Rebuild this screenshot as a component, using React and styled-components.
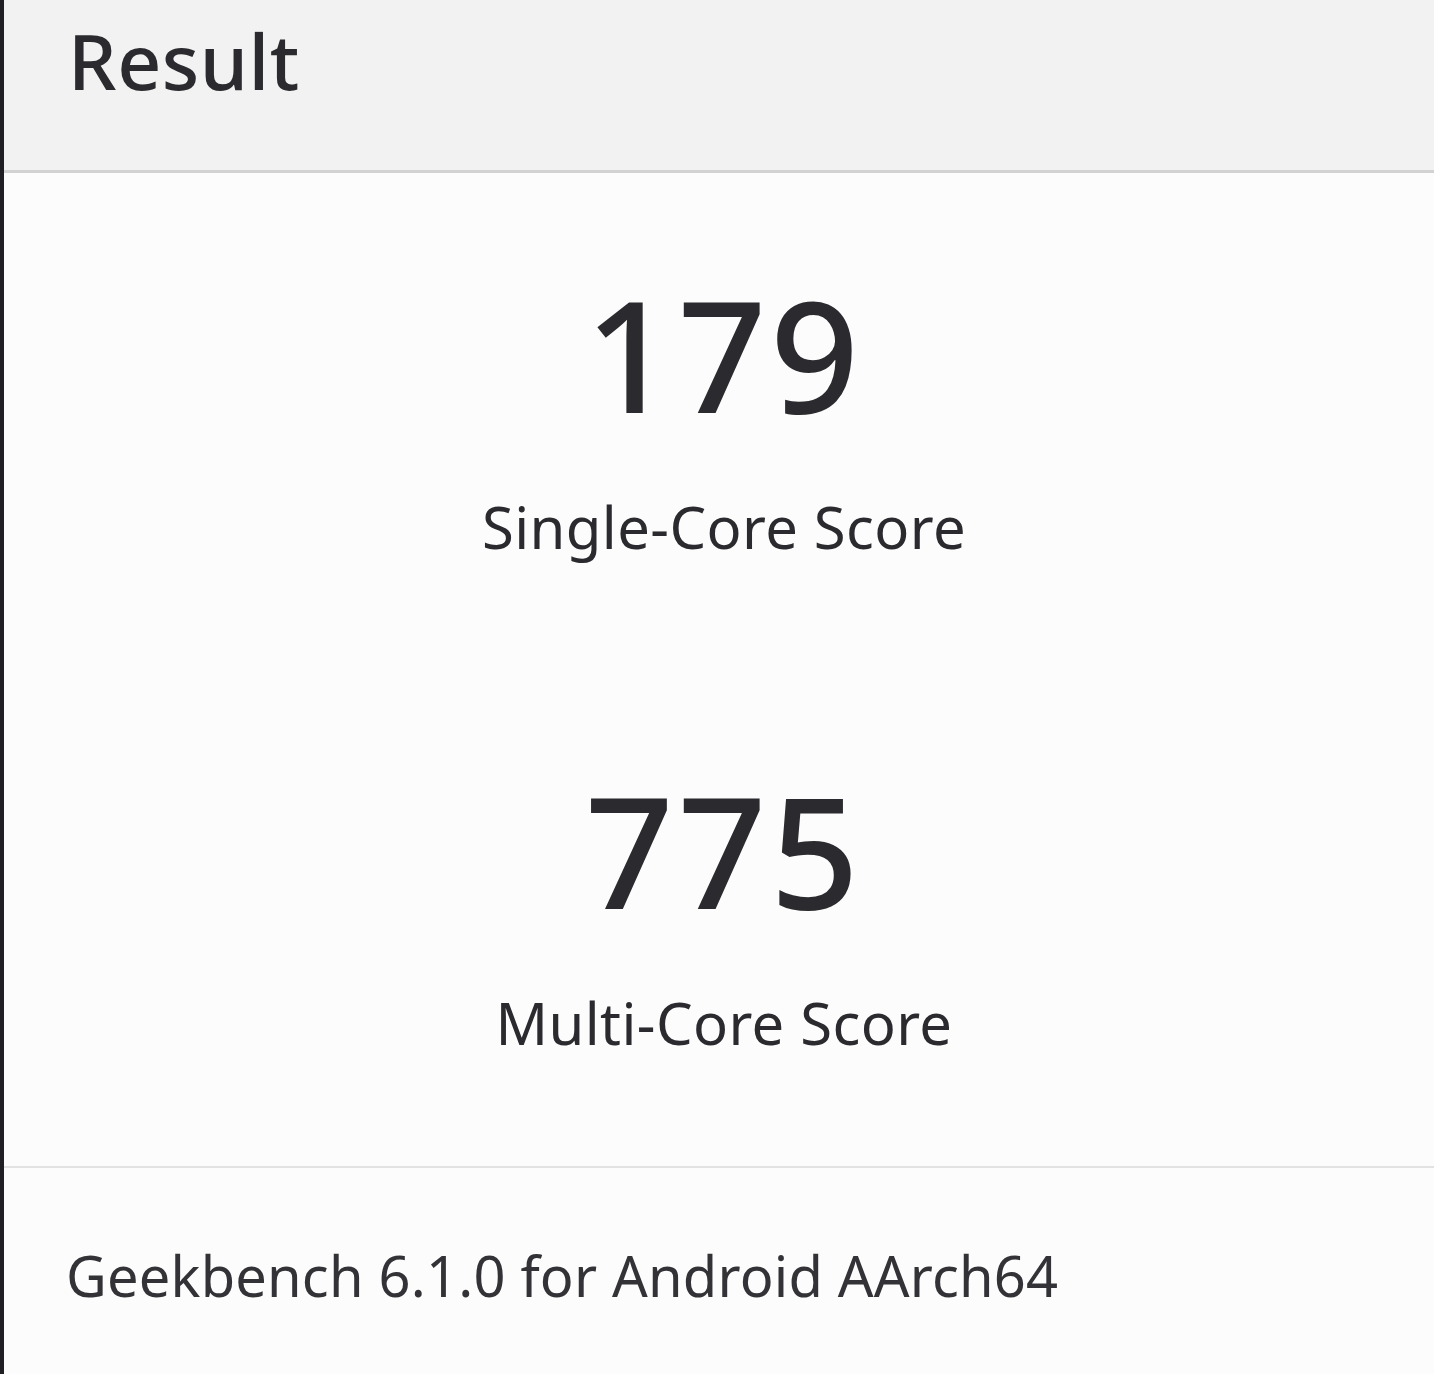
import styled, { createGlobalStyle } from "styled-components";

const GlobalStyle = createGlobalStyle`
    html, body {
        margin: 0;
        padding: 0;
        background: #fcfcfc;
    }
    body {
        font-family: "Noto Sans", "Open Sans", sans-serif;
        color: #2b2b2f;
    }
`;

const Screen = styled.div`
    width: 1434px;
    height: 1374px;
    display: flex;
    flex-direction: column;
    border-left: 4px solid #1f1f24;
    box-sizing: border-box;
    background: #fcfcfc;
    overflow: hidden;
`;

const Header = styled.header`
    height: 170px;
    flex-shrink: 0;
    background: #f2f2f2;
    border-bottom: 3px solid #d2d2d2;
    padding-left: 64px;
    display: flex;
    align-items: flex-start;
`;

const Title = styled.h1`
    margin: 0;
    margin-top: 11px;
    font-size: 77px;
    font-weight: 500;
    line-height: 100px;
    letter-spacing: 0.5px;
`;

const Scores = styled.section`
    height: 995px;
    flex-shrink: 0;
    display: flex;
    flex-direction: column;
    align-items: center;
    padding-top: 90px;
    padding-left: 10px;
    box-sizing: border-box;
    border-bottom: 2px solid #e2e2e2;
    gap: 192px;
`;

const ScoreBlock = styled.div`
    display: flex;
    flex-direction: column;
    align-items: center;
`;

const ScoreValue = styled.div`
    font-size: 155px;
    font-weight: 500;
    line-height: 180px;
    letter-spacing: 4px;
`;

const ScoreLabel = styled.div`
    margin-top: 44px;
    font-size: 58px;
    line-height: 80px;
    letter-spacing: 0.4px;
`;

const Footer = styled.footer`
    padding-left: 62px;
    padding-top: 67px;
`;

const Version = styled.p`
    margin: 0;
    font-size: 56px;
    line-height: 80px;
    letter-spacing: 0.2px;
    color: #333337;
`;

const scores = [
    { value: "179", label: "Single-Core Score" },
    { value: "775", label: "Multi-Core Score" },
];

const App = () => {
    return (
        <>
            <GlobalStyle />
            <Screen>
                <Header>
                    <Title>Result</Title>
                </Header>
                <Scores>
                    {scores.map((item) => (
                        <ScoreBlock key={item.label}>
                            <ScoreValue>{item.value}</ScoreValue>
                            <ScoreLabel>{item.label}</ScoreLabel>
                        </ScoreBlock>
                    ))}
                </Scores>
                <Footer>
                    <Version>Geekbench 6.1.0 for Android AArch64</Version>
                </Footer>
            </Screen>
        </>
    );
};

export default App;
